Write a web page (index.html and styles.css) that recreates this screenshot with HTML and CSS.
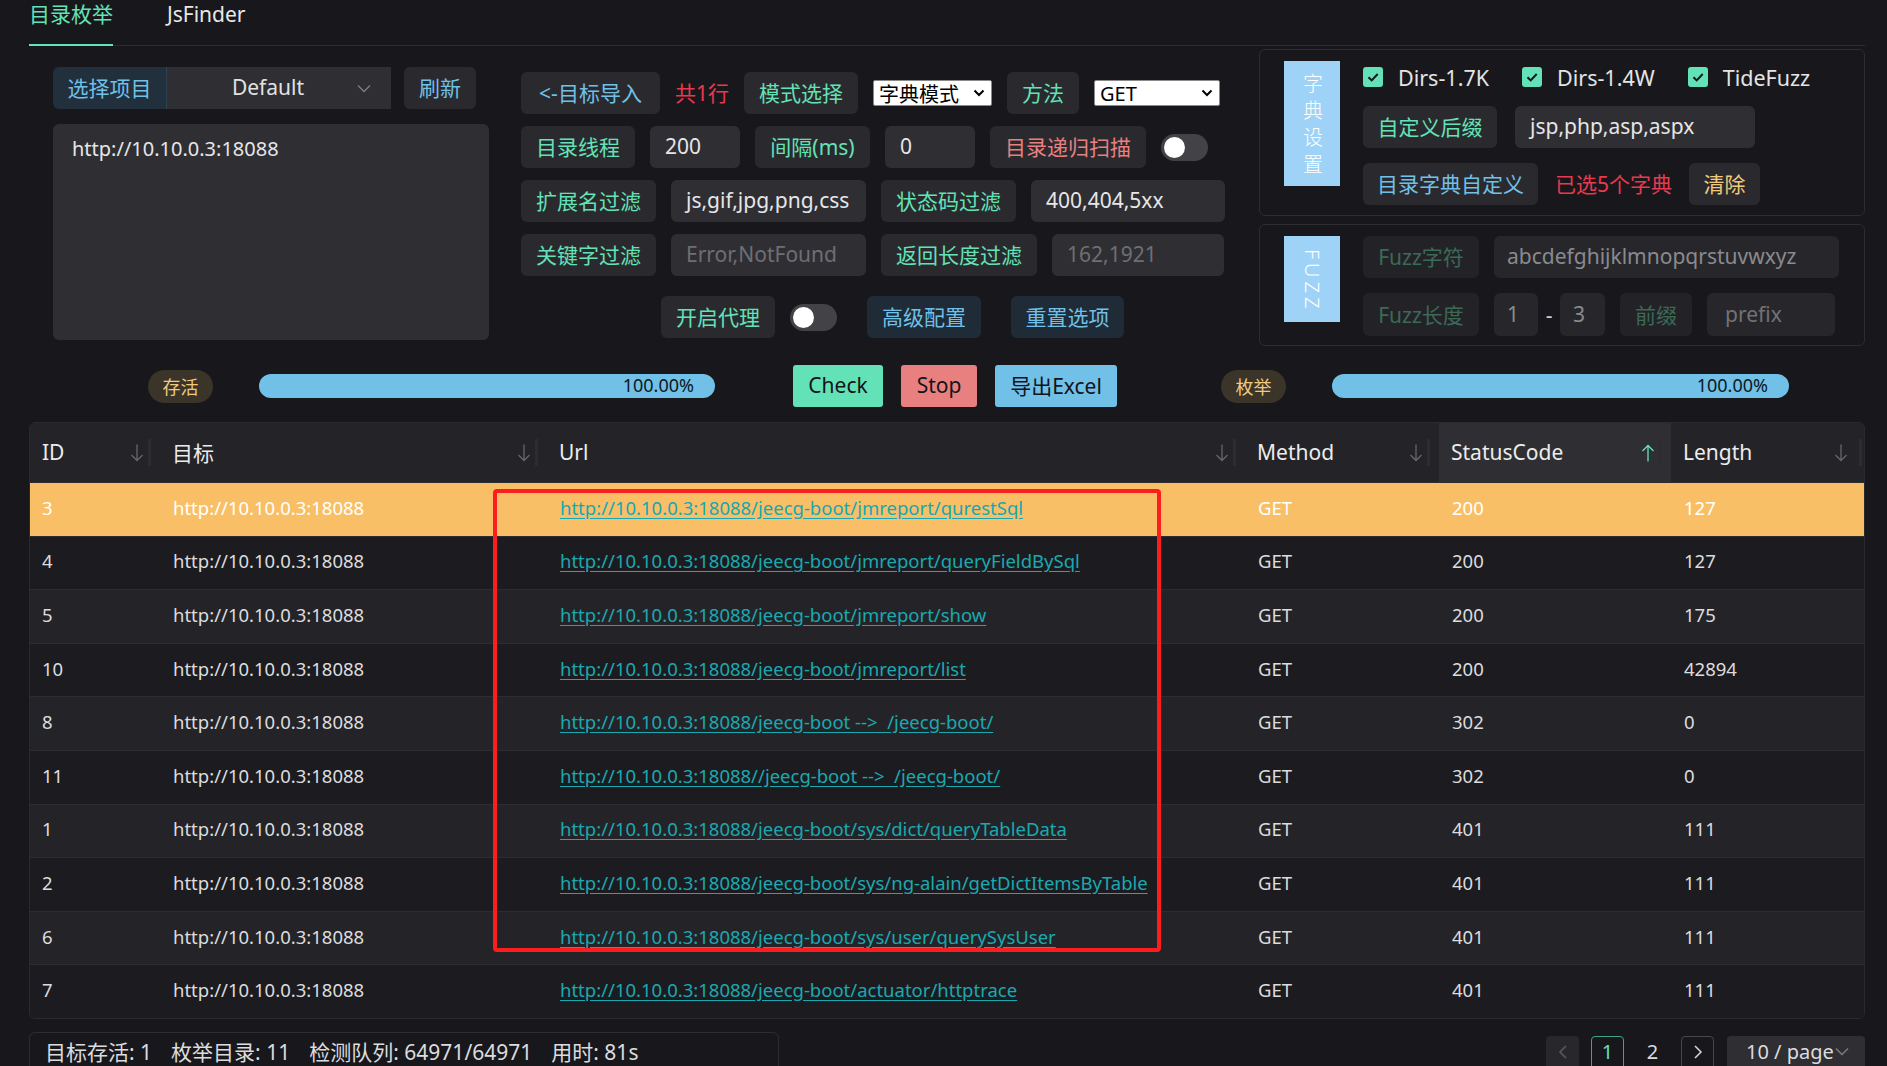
FILE: index.html
```html
<!DOCTYPE html>
<html lang="zh-CN">
<head>
<meta charset="utf-8">
<title>目录枚举</title>
<link rel="stylesheet" href="styles.css">
</head>
<body>
<div class="app">
  <div class="tabs">
    <div class="tab active">目录枚举</div>
    <div class="tab">JsFinder</div>
  </div>

  <div class="top">
    <div class="left">
      <div class="proj">
        <div class="proj-label">选择项目</div>
        <div class="proj-select"><span class="proj-value">Default</span>
          <svg class="chev" width="14" height="9" viewBox="0 0 14 9"><path d="M1 1.5l6 6 6-6" fill="none" stroke="#7d7d82" stroke-width="1.4"/></svg>
        </div>
        <div class="refresh">刷新</div>
      </div>
      <div class="targets">http://10.10.0.3:18088</div>
    </div>

    <div class="mid">
      <div class="row">
        <div class="btn b w139">&lt;-目标导入</div>
        <div class="note rd">共1行</div>
        <div class="btn g w114">模式选择</div>
        <div class="nsel w119"><span>字典模式</span><svg width="12" height="8" viewBox="0 0 12 8"><path d="M1.5 1.5l4.5 4.5 4.5-4.5" fill="none" stroke="#000" stroke-width="2"/></svg></div>
        <div class="btn g w72">方法</div>
        <div class="nsel w126"><span>GET</span><svg width="12" height="8" viewBox="0 0 12 8"><path d="M1.5 1.5l4.5 4.5 4.5-4.5" fill="none" stroke="#000" stroke-width="2"/></svg></div>
      </div>
      <div class="row">
        <div class="btn g w114">目录线程</div>
        <div class="inp w90">200</div>
        <div class="btn g w115">间隔(ms)</div>
        <div class="inp w90">0</div>
        <div class="btn r w156">目录递归扫描</div>
        <div class="toggle"></div>
      </div>
      <div class="row">
        <div class="btn g w135">扩展名过滤</div>
        <div class="inp w195">js,gif,jpg,png,css</div>
        <div class="btn g w135">状态码过滤</div>
        <div class="inp w194">400,404,5xx</div>
      </div>
      <div class="row">
        <div class="btn g w135">关键字过滤</div>
        <div class="inp ph w195">Error,NotFound</div>
        <div class="btn g w156">返回长度过滤</div>
        <div class="inp ph w172">162,1921</div>
      </div>
      <div class="row r5">
        <div class="btn g w114">开启代理</div>
        <div class="toggle"></div>
        <div class="btn info w114 sp">高级配置</div>
        <div class="btn info w113 sp">重置选项</div>
      </div>
    </div>

    <div class="right">
      <div class="box box1">
        <div class="vlabel vl1"><span class="vtext">字典设置</span></div>
        <div class="content c1">
          <div class="cbrow">
            <div class="cb-item"><span class="cb"><svg width="20" height="20" viewBox="0 0 20 20"><path d="M5.5 10.2l3.2 3.2 6-6.4" fill="none" stroke="#15151a" stroke-width="2"/></svg></span>Dirs-1.7K</div>
            <div class="cb-item"><span class="cb"><svg width="20" height="20" viewBox="0 0 20 20"><path d="M5.5 10.2l3.2 3.2 6-6.4" fill="none" stroke="#15151a" stroke-width="2"/></svg></span>Dirs-1.4W</div>
            <div class="cb-item"><span class="cb"><svg width="20" height="20" viewBox="0 0 20 20"><path d="M5.5 10.2l3.2 3.2 6-6.4" fill="none" stroke="#15151a" stroke-width="2"/></svg></span>TideFuzz</div>
          </div>
          <div class="row rr2">
            <div class="btn g w134">自定义后缀</div>
            <div class="inp w240 ml3">jsp,php,asp,aspx</div>
          </div>
          <div class="row rr3">
            <div class="btn b w175">目录字典自定义</div>
            <div class="note rd">已选5个字典</div>
            <div class="btn y w71">清除</div>
          </div>
        </div>
      </div>
      <div class="box box2">
        <div class="vlabel vl2"><span class="vtext fz">FUZZ</span></div>
        <div class="content c2">
          <div class="row">
            <div class="btn dis w116">Fuzz字符</div>
            <div class="inp dinp w345">abcdefghijklmnopqrstuvwxyz</div>
          </div>
          <div class="row rr2b">
            <div class="btn dis w116">Fuzz长度</div>
            <div class="inp dinp w44">1</div>
            <div class="dash">-</div>
            <div class="inp dinp w45">3</div>
            <div class="btn dis w72">前缀</div>
            <div class="inp dinp dph w128">prefix</div>
          </div>
        </div>
      </div>
    </div>
  </div>

  <div class="prog">
    <div class="pill">存活</div>
    <div class="bar bar1">100.00%</div>
    <div class="abtn check">Check</div>
    <div class="abtn stop">Stop</div>
    <div class="abtn excel">导出Excel</div>
    <div class="pill pill2">枚举</div>
    <div class="bar bar2">100.00%</div>
  </div>

  <div class="tbl">
    <div class="tr thead">
      <div class="th">ID<svg class="arr" width="14" height="20" viewBox="0 0 14 20"><path d="M7 1.5v16M1.5 12l5.5 5.5 5.5-5.5" fill="none" stroke="#66666b" stroke-width="1.3"/></svg></div>
      <div class="th">目标<svg class="arr" width="14" height="20" viewBox="0 0 14 20"><path d="M7 1.5v16M1.5 12l5.5 5.5 5.5-5.5" fill="none" stroke="#66666b" stroke-width="1.3"/></svg></div>
      <div class="th">Url<svg class="arr" width="14" height="20" viewBox="0 0 14 20"><path d="M7 1.5v16M1.5 12l5.5 5.5 5.5-5.5" fill="none" stroke="#66666b" stroke-width="1.3"/></svg></div>
      <div class="th">Method<svg class="arr" width="14" height="20" viewBox="0 0 14 20"><path d="M7 1.5v16M1.5 12l5.5 5.5 5.5-5.5" fill="none" stroke="#66666b" stroke-width="1.3"/></svg></div>
      <div class="th sorted">StatusCode<svg class="arr" width="14" height="20" viewBox="0 0 14 20"><path d="M7 18.5v-16M1.5 8l5.5-5.5 5.5 5.5" fill="none" stroke="#63e2b7" stroke-width="1.3"/></svg></div>
      <div class="th">Length<svg class="arr" width="14" height="20" viewBox="0 0 14 20"><path d="M7 1.5v16M1.5 12l5.5 5.5 5.5-5.5" fill="none" stroke="#66666b" stroke-width="1.3"/></svg></div>
    </div>
    <div class="tr hl"><div class="td">3</div><div class="td">http://10.10.0.3:18088</div><div class="td"><a class="lnk">http://10.10.0.3:18088/jeecg-boot/jmreport/qurestSql</a></div><div class="td">GET</div><div class="td">200</div><div class="td">127</div></div>
    <div class="tr"><div class="td">4</div><div class="td">http://10.10.0.3:18088</div><div class="td"><a class="lnk">http://10.10.0.3:18088/jeecg-boot/jmreport/queryFieldBySql</a></div><div class="td">GET</div><div class="td">200</div><div class="td">127</div></div>
    <div class="tr"><div class="td">5</div><div class="td">http://10.10.0.3:18088</div><div class="td"><a class="lnk">http://10.10.0.3:18088/jeecg-boot/jmreport/show</a></div><div class="td">GET</div><div class="td">200</div><div class="td">175</div></div>
    <div class="tr"><div class="td">10</div><div class="td">http://10.10.0.3:18088</div><div class="td"><a class="lnk">http://10.10.0.3:18088/jeecg-boot/jmreport/list</a></div><div class="td">GET</div><div class="td">200</div><div class="td">42894</div></div>
    <div class="tr"><div class="td">8</div><div class="td">http://10.10.0.3:18088</div><div class="td"><a class="lnk">http://10.10.0.3:18088/jeecg-boot --&gt;&nbsp; /jeecg-boot/</a></div><div class="td">GET</div><div class="td">302</div><div class="td">0</div></div>
    <div class="tr"><div class="td">11</div><div class="td">http://10.10.0.3:18088</div><div class="td"><a class="lnk">http://10.10.0.3:18088//jeecg-boot --&gt;&nbsp; /jeecg-boot/</a></div><div class="td">GET</div><div class="td">302</div><div class="td">0</div></div>
    <div class="tr"><div class="td">1</div><div class="td">http://10.10.0.3:18088</div><div class="td"><a class="lnk">http://10.10.0.3:18088/jeecg-boot/sys/dict/queryTableData</a></div><div class="td">GET</div><div class="td">401</div><div class="td">111</div></div>
    <div class="tr"><div class="td">2</div><div class="td">http://10.10.0.3:18088</div><div class="td"><a class="lnk">http://10.10.0.3:18088/jeecg-boot/sys/ng-alain/getDictItemsByTable</a></div><div class="td">GET</div><div class="td">401</div><div class="td">111</div></div>
    <div class="tr"><div class="td">6</div><div class="td">http://10.10.0.3:18088</div><div class="td"><a class="lnk">http://10.10.0.3:18088/jeecg-boot/sys/user/querySysUser</a></div><div class="td">GET</div><div class="td">401</div><div class="td">111</div></div>
    <div class="tr"><div class="td">7</div><div class="td">http://10.10.0.3:18088</div><div class="td"><a class="lnk">http://10.10.0.3:18088/jeecg-boot/actuator/httptrace</a></div><div class="td">GET</div><div class="td">401</div><div class="td">111</div></div>
  </div>

  <div class="foot">
    <div class="status">
      <span>目标存活: 1</span><span>枚举目录: 11</span><span>检测队列: 64971/64971</span><span>用时: 81s</span>
    </div>
    <div class="pager">
      <div class="pg prev"><svg width="10" height="16" viewBox="0 0 10 16"><path d="M8 2L2 8l6 6" fill="none" stroke="#5a5a5f" stroke-width="1.5"/></svg></div>
      <div class="pg cur">1</div>
      <div class="pg">2</div>
      <div class="pg next"><svg width="10" height="16" viewBox="0 0 10 16"><path d="M2 2l6 6-6 6" fill="none" stroke="#d8d8da" stroke-width="1.5"/></svg></div>
      <div class="psize"><span>10 / page</span><svg width="14" height="9" viewBox="0 0 14 9"><path d="M1 1.5l6 6 6-6" fill="none" stroke="#7d7d82" stroke-width="1.4"/></svg></div>
    </div>
  </div>

  <div class="annot"></div>
</div>
</body>
</html>
```

FILE: styles.css
```css
* { box-sizing: border-box; }

body {
  margin: 0;
  background: #18181c;
  color: #e2e2e4;
  font-family: "Noto Sans", "Noto Sans CJK SC", sans-serif;
  font-size: 20px;
  overflow: hidden;
}

.app {
  position: relative;
  width: 1887px;
  height: 1066px;
  padding: 0 22px 0 29px;
}

/* tabs */
.tabs {
  display: flex;
  gap: 54px;
  height: 46px;
  border-bottom: 1px solid #2d2d31;
}
.tab {
  position: relative;
  font-size: 21px;
  line-height: 28px;
  color: #e8e8ea;
}
.tab.active { color: #63e2b7; }
.tab.active::after {
  content: "";
  position: absolute;
  left: 0;
  right: 0;
  top: 44px;
  height: 2px;
  background: #63e2b7;
}

/* top area */
.top {
  display: flex;
  align-items: flex-start;
}

.left {
  width: 436px;
  margin: 21px 0 0 24px;
}
.proj {
  display: flex;
  height: 42px;
}
.proj-label {
  width: 114px;
  background: #22303d;
  color: #70c0e8;
  border-radius: 6px 0 0 6px;
  border-right: 1px solid #2c4152;
  display: flex;
  align-items: center;
  justify-content: center;
  font-size: 21px;
  padding-bottom: 2px;
}
.proj-select {
  width: 224px;
  background: #2f2f33;
  display: flex;
  align-items: center;
  font-size: 21px;
  padding-bottom: 2px;
}
.proj-value {
  flex: 1;
  text-align: center;
  padding-left: 12px;
}
.proj-select .chev { margin-right: 20px; margin-top: 2px; }
.refresh {
  margin-left: 13px;
  width: 72px;
  background: #2a2a2e;
  color: #70c0e8;
  border-radius: 6px;
  display: flex;
  align-items: center;
  justify-content: center;
  font-size: 21px;
  padding-bottom: 2px;
}
.targets {
  margin-top: 15px;
  height: 216px;
  background: #2f2f33;
  border-radius: 6px;
  padding: 11px 19px;
  line-height: 28px;
  font-size: 20px;
  color: #e6e6e8;
}

.mid {
  width: 704px;
  margin: 26px 0 0 32px;
  display: flex;
  flex-direction: column;
}
.row {
  display: flex;
  align-items: center;
  gap: 15px;
  height: 42px;
}
.mid .row + .row { margin-top: 12px; }
.mid .row.r5 {
  margin-top: 20px;
  padding-left: 140px;
}
.r5 .sp { margin-left: 15px; }

.btn {
  height: 42px;
  background: #2a2a2e;
  border-radius: 6px;
  display: flex;
  align-items: center;
  justify-content: center;
  white-space: nowrap;
  font-size: 21px;
  flex: none;
  padding-bottom: 2px;
}
.btn.info { background: #1f2b36; color: #70c0e8; }
.btn.dis { background: #232327; color: #3b6a56; }

.g { color: #63e2b7; }
.b { color: #70c0e8; }
.r { color: #e88080; }
.rd { color: #e8394f; }
.y { color: #f2c97d; }

.note {
  font-size: 21px;
  white-space: nowrap;
  padding-bottom: 2px;
}

.inp {
  height: 42px;
  background: #2f2f33;
  border-radius: 6px;
  padding: 0 15px 2px;
  display: flex;
  align-items: center;
  font-size: 21px;
  color: #e6e6e8;
  white-space: nowrap;
  flex: none;
}
.inp.ph { color: #6e6e73; }
.inp.dinp { background: #27272b; color: #8a8a8e; padding: 0 13px 2px; }
.inp.dinp.dph { color: #727276; padding-left: 18px; }

.nsel {
  height: 26px;
  background: #ffffff;
  border: 1px solid #8a8a8a;
  border-radius: 2px;
  color: #000;
  display: flex;
  align-items: center;
  justify-content: space-between;
  padding: 0 6px 0 5px;
  font-size: 20px;
  flex: none;
}

.toggle {
  position: relative;
  width: 47px;
  height: 27px;
  border-radius: 14px;
  background: #434347;
  flex: none;
}
.toggle::before {
  content: "";
  position: absolute;
  left: 3px;
  top: 3px;
  width: 21px;
  height: 21px;
  border-radius: 50%;
  background: #ffffff;
}

.w44 { width: 44px; }
.w45 { width: 45px; }
.w71 { width: 71px; }
.w72 { width: 72px; }
.w90 { width: 90px; }
.w113 { width: 113px; }
.w114 { width: 114px; }
.w115 { width: 115px; }
.w116 { width: 116px; }
.w119 { width: 119px; }
.w126 { width: 126px; }
.w128 { width: 128px; }
.w134 { width: 134px; }
.w135 { width: 135px; }
.w139 { width: 139px; }
.w156 { width: 156px; }
.w172 { width: 172px; }
.w175 { width: 175px; }
.w194 { width: 194px; }
.w195 { width: 195px; }
.w240 { width: 240px; }
.w345 { width: 345px; }
.ml3 { margin-left: 3px; }

/* right panel */
.right {
  width: 606px;
  margin: 3px 0 0 34px;
}
.box {
  border: 1px solid #2d2d31;
  border-radius: 6px;
  display: flex;
  align-items: flex-start;
  padding-left: 24px;
}
.box1 { height: 167px; }
.box2 { height: 122px; margin-top: 8px; }

.vlabel {
  width: 56px;
  margin-top: 11px;
  background: #9fd2f7;
  color: #ffffff;
  display: flex;
  align-items: center;
  justify-content: center;
  flex: none;
}
.vl1 { height: 125px; padding-top: 6px; }
.vl2 { height: 86px; padding-top: 4px; }
.vtext {
  writing-mode: vertical-rl;
  font-size: 20px;
  letter-spacing: 7px;
  font-weight: 300;
}
.vtext.fz {
  font-size: 20px;
  letter-spacing: 4px;
}

.content {
  margin-left: 23px;
  display: flex;
  flex-direction: column;
}
.c1 { padding-top: 6px; }
.c2 { padding-top: 11px; }

.cbrow {
  display: flex;
  align-items: center;
  gap: 33px;
  height: 42px;
}
.cb-item {
  display: flex;
  align-items: center;
  gap: 15px;
  font-size: 21.5px;
  color: #e4e4e6;
}
.cb {
  width: 20px;
  height: 20px;
  border-radius: 3px;
  background: #63e2b7;
  display: block;
}
.cb svg { display: block; }
.row.rr2 { margin-top: 8px; gap: 15px; }
.row.rr3 { margin-top: 15px; gap: 17px; }
.row.rr2b { margin-top: 15px; height: 43px; }
.row.rr2b .inp, .row.rr2b .btn { height: 43px; }
.dash {
  width: 0;
  margin: 0 -4px;
  display: flex;
  justify-content: center;
  color: #d0d0d2;
  font-size: 21px;
}

/* progress row */
.prog {
  display: flex;
  align-items: center;
  height: 42px;
  margin-top: 19px;
  padding-left: 119px;
}
.pill {
  width: 65px;
  height: 33px;
  border-radius: 17px;
  background: #3a3429;
  color: #f2c97d;
  font-size: 18px;
  display: flex;
  align-items: center;
  justify-content: center;
  flex: none;
  padding-bottom: 1px;
}
.bar {
  height: 24px;
  border-radius: 12px;
  background: #70c0e8;
  color: #0c1822;
  font-size: 18px;
  line-height: 23px;
  text-align: right;
  padding-right: 21px;
  flex: none;
}
.bar1 { width: 456px; margin-left: 46px; }
.bar2 { width: 457px; margin-left: 46px; }
.abtn {
  height: 42px;
  border-radius: 3px;
  color: #141418;
  font-size: 21px;
  display: flex;
  align-items: center;
  justify-content: center;
  flex: none;
  padding-bottom: 2px;
}
.check { width: 90px; margin-left: 78px; background: #63e2b7; }
.stop { width: 76px; margin-left: 18px; background: #e88080; }
.excel { width: 122px; margin-left: 18px; background: #70c0e8; }
.pill2 { margin-left: 104px; }

/* table */
.tbl {
  margin-top: 15px;
  border: 1px solid #2a2a2e;
  border-radius: 6px;
  overflow: hidden;
}
.tr {
  display: grid;
  grid-template-columns: 130px 387px 698px 194px 232px 1fr;
  height: 53.6px;
  border-top: 1px solid #2d2d31;
  background: #242428;
}
.tr:nth-child(odd) { background: #1c1c20; }
.tr.thead {
  height: 59px;
  border-top: 0;
  background: #242428;
}
.th {
  position: relative;
  display: flex;
  align-items: center;
  justify-content: space-between;
  padding: 0 16px 2px 12px;
  font-size: 21px;
  color: #ececee;
}
.th .arr { margin-top: 2px; }
.th::after {
  content: "";
  position: absolute;
  right: 9px;
  top: 16px;
  bottom: 16px;
  width: 3px;
  background: #2d2d31;
}
.th:last-child::after { right: 2px; }
.th.sorted { background: #2f2f33; }
.th .arr { flex: none; }
.td {
  display: flex;
  align-items: center;
  padding: 0 0 4px 12px;
  font-size: 18.5px;
  color: #dcdcdf;
  white-space: nowrap;
}
.td:nth-child(n+2) { padding-left: 13px; }
.lnk {
  color: #1aa9b0;
  text-decoration: underline;
  text-underline-offset: 3px;
}
.tr.hl { background: #f9bf66; }
.tr.hl .td { color: #ffffff; }
.tr.hl .lnk { color: #14a8b4; }

/* footer */
.foot {
  display: flex;
  justify-content: space-between;
  align-items: center;
  margin-top: 13px;
}
.status {
  width: 750px;
  height: 42px;
  border: 1px solid #2d2d31;
  border-radius: 6px;
  display: flex;
  align-items: center;
  gap: 19px;
  padding: 0 0 4px 15px;
  font-size: 21px;
  color: #dcdcdf;
}
.pager {
  display: flex;
  align-items: center;
  gap: 12px;
}
.pg {
  width: 33px;
  height: 34px;
  border-radius: 4px;
  display: flex;
  align-items: center;
  justify-content: center;
  font-size: 20px;
  color: #dcdcdf;
  padding-bottom: 2px;
}
.pg.prev { background: #28282c; }
.pg.cur { border: 1px solid #3fa585; color: #63e2b7; }
.pg.next { border: 1px solid #46464b; }
.psize {
  width: 138px;
  height: 34px;
  margin-left: 1px;
  border-radius: 4px;
  background: #2f2f33;
  display: flex;
  align-items: center;
  justify-content: space-between;
  padding: 0 16px 2px 19px;
  font-size: 20px;
  color: #dcdcdf;
}

/* annotation overlay */
.annot {
  position: absolute;
  left: 493px;
  top: 489px;
  width: 668px;
  height: 463px;
  border: 4px solid #fe1d1d;
  border-radius: 4px;
}
```
